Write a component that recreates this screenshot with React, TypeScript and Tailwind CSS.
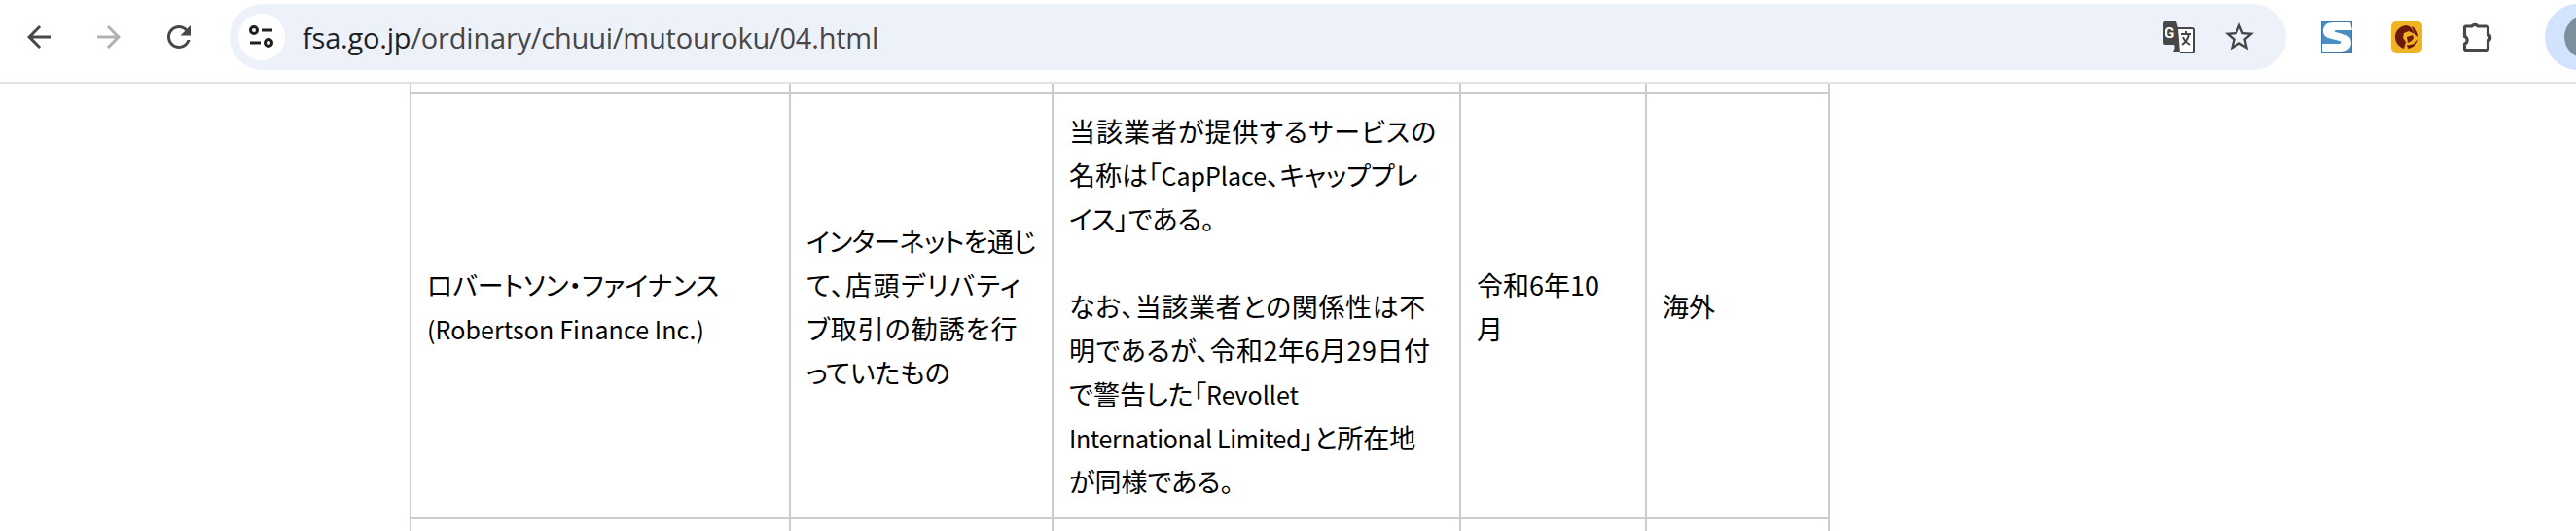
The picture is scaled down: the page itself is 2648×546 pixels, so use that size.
function BackIcon() {
    return (
        <svg width="36" height="36" viewBox="0 0 24 24" fill="#474747">
            <path d="M20 11H7.83l5.59-5.59L12 4l-8 8 8 8 1.41-1.41L7.83 13H20v-2z" />
        </svg>
    );
}

function ForwardIcon() {
    return (
        <svg width="36" height="36" viewBox="0 0 24 24" fill="#b1b1b1">
            <path d="M12 4l-1.41 1.41L16.17 11H4v2h12.17l-5.58 5.59L12 20l8-8z" />
        </svg>
    );
}

function ReloadIcon() {
    return (
        <svg width="36" height="36" viewBox="0 0 24 24" fill="#474747">
            <path d="M17.65 6.35C16.2 4.9 14.21 4 12 4c-4.42 0-7.99 3.58-7.99 8s3.57 8 7.99 8c3.73 0 6.84-2.55 7.73-6h-2.08c-.82 2.33-3.04 4-5.65 4-3.31 0-6-2.69-6-6s2.69-6 6-6c1.66 0 3.14.69 4.22 1.78L13 11h7V4l-2.35 2.35z" />
        </svg>
    );
}

function StarIcon() {
    return (
        <svg width="36" height="36" viewBox="0 0 24 24" fill="#474747">
            <path d="M22 9.24l-7.19-.62L12 2 9.19 8.63 2 9.24l5.46 4.73L5.82 21 12 17.27 18.18 21l-1.63-7.03L22 9.24zM12 15.4l-3.76 2.27 1-4.28-3.32-2.88 4.38-.38L12 6.1l1.71 4.04 4.38.38-3.32 2.88 1 4.28L12 15.4z" />
        </svg>
    );
}

function TuneIcon() {
    return (
        <svg width="26" height="24" viewBox="0 0 26 24" fill="none" stroke="#1f1f1f" strokeWidth="3">
            <circle cx="5" cy="5" r="3.5" />
            <path d="M13 5h11M1 18h11" />
            <circle cx="20" cy="18" r="3.5" />
        </svg>
    );
}

function TranslateIcon() {
    return (
        <svg width="34" height="34" viewBox="0 0 34 34">
            <path d="M3 1h12l9 31h-9l-2-7H3a2 2 0 0 1-2-2V3a2 2 0 0 1 2-2z" fill="#474747" />
            <path d="M17 8h14a2 2 0 0 1 2 2v21a2 2 0 0 1-2 2H19" fill="#fff" stroke="#474747" strokeWidth="2" />
            <path d="M15 25l3 7h-6z" fill="#474747" />
            <text x="3" y="18" fontSize="15" fontWeight="700" fill="#fff" fontFamily="Roboto, sans-serif">G</text>
            <path d="M20 14h10M25 11v3M28 14c-1 5-4 9-7 11M22 17c1 3 4 6 7 8" fill="none" stroke="#474747" strokeWidth="2" />
        </svg>
    );
}

function ExtensionS() {
    return (
        <svg width="32" height="32" viewBox="0 0 32 32">
            <rect width="32" height="32" fill="#3d78a8" />
            <rect x="1" y="1" width="30" height="30" fill="#4a8fc4" />
            <path d="M30 1H12C5 1 2 5 2 10c0 5 4 7 9 8l8 2c2 .5 2 3-1 3H1v8h19c7 0 11-4 11-9 0-6-4-8-9-9l-7-2c-2-.6-2-2 1-2h16z" fill="#fff" />
        </svg>
    );
}

function ExtensionEagle() {
    return (
        <div className="flex h-8 w-8 items-center justify-center rounded-[5px] bg-[#f0b323]">
            <svg width="26" height="26" viewBox="0 0 26 26" fill="#6b1a0c">
                <path d="M12 1C5 2 1 7 1 13c0 6 4 10 9 12l2-7-3-4 1-5 5-2 4 2 2 1-3-6c-2-2-4-3-6-3z" />
                <path d="M18 2c4 2 7 6 7 11l-4-3zM25 15c-1 5-5 9-11 10l-1-4c5 1 9-2 12-6z" />
                <path d="M13 13l6-2 1 3c-1 2-3 4-6 5z" />
            </svg>
        </div>
    );
}

function ExtensionsIcon() {
    return (
        <svg width="36" height="34" viewBox="0 0 36 34" fill="none" stroke="#474747" strokeWidth="3.2" strokeLinejoin="round">
            <path d="M5 6h6a3.5 3.5 0 0 1 6 0h9a1.5 1.5 0 0 1 1.5 1.5v7a3.5 3.5 0 0 1 0 6.5v8a1.5 1.5 0 0 1-1.5 1.5H5a1.5 1.5 0 0 1-1.5-1.5v-5a4 4 0 0 0 0-7.5V7.5A1.5 1.5 0 0 1 5 6z" />
        </svg>
    );
}

function Toolbar() {
    return (
        <div className="flex h-[86px] shrink-0 items-start border-b-2 border-[#e3e3e3] bg-white">
            <div className="flex h-[76px] w-[236px] shrink-0 items-center gap-9 pl-[22px]">
                <BackIcon />
                <ForwardIcon />
                <ReloadIcon />
            </div>
            <div className="mt-1 flex h-[68px] w-[2114px] shrink-0 items-center rounded-full bg-[#edf2fa] pl-[9px] pr-[30px]">
                <div className="flex h-12 w-12 items-center justify-center rounded-full bg-white">
                    <TuneIcon />
                </div>
                <div className="ml-[18px] flex-1 font-['Open_Sans',sans-serif] text-[29px] leading-none tracking-[-0.2px] text-[#474747]">
                    <span className="text-[#1f1f1f]">fsa.go.jp</span>/ordinary/chuui/mutouroku/04.html
                </div>
                <div className="flex items-center gap-7">
                    <TranslateIcon />
                    <StarIcon />
                </div>
            </div>
            <div className="ml-9 flex h-[76px] items-center gap-10">
                <ExtensionS />
                <ExtensionEagle />
                <ExtensionsIcon />
            </div>
            <div className="ml-8 mt-[22px] h-[32px] w-1 rounded-full bg-[#d3e3fd]" />
            <div className="ml-[18px] mt-1 flex h-[68px] w-[68px] shrink-0 items-center rounded-full bg-[#d3e3fd] pl-5">
                <div className="h-11 w-11 shrink-0 rounded-full bg-[#7a919c]" />
            </div>
        </div>
    );
}

const cell = "border-2 border-[#cccccc] px-[16px] align-middle";
const stub = "border-x-2 border-b-2 border-[#cccccc]";

function Table() {
    return (
        <table className="ml-[421px] w-[1458px] table-fixed border-collapse font-['Noto_Sans_CJK_JP',sans-serif] text-[27px] leading-[45px] text-black [font-feature-settings:'palt']">
            <colgroup>
                <col className="w-[390px]" />
                <col className="w-[270px]" />
                <col className="w-[419px]" />
                <col className="w-[191px]" />
                <col className="w-[188px]" />
            </colgroup>
            <tbody>
                <tr className="h-[10px]">
                    <td className={stub} />
                    <td className={stub} />
                    <td className={stub} />
                    <td className={stub} />
                    <td className={stub} />
                </tr>
                <tr className="h-[437px]">
                    <td className={cell}>
                        ロバートソン・ファイナンス
                        <br />
                        <span className="text-[25px] leading-none tracking-[0.1px]">(Robertson Finance Inc.)</span>
                    </td>
                    <td className={cell}>
                        <span className="whitespace-nowrap tracking-[-0.6px]">インターネットを通じ</span>
                        <br />
                        <span className="tracking-[1.5px]">て、店頭デリバティ</span>
                        <br />
                        <span className="tracking-[1px]">ブ取引の勧誘を行</span>
                        <br />
                        っていたもの
                    </td>
                    <td className={cell}>
                        <span className="whitespace-nowrap tracking-[1px]">当該業者が提供するサービスの</span>
                        <br />
                        <span className="whitespace-nowrap">
                            名称は「<span className="text-[25px] leading-none">CapPlace</span>、キャッププレ
                        </span>
                        <br />
                        イス」である。
                        <br />
                        <br />
                        <span className="whitespace-nowrap tracking-[0.6px]">なお、当該業者との関係性は不</span>
                        <br />
                        <span className="whitespace-nowrap tracking-[0.5px]">明であるが、令和2年6月29日付</span>
                        <br />
                        で警告した「<span className="text-[25px] leading-none">Revollet</span>
                        <br />
                        <span className="whitespace-nowrap">
                            <span className="text-[25px] leading-none tracking-[-0.4px]">International Limited</span>」と所在地
                        </span>
                        <br />
                        が同様である。
                    </td>
                    <td className={cell}>
                        令和6年10
                        <br />月
                    </td>
                    <td className={cell}>海外</td>
                </tr>
                <tr className="h-[40px]">
                    <td className={cell} />
                    <td className={cell} />
                    <td className={cell} />
                    <td className={cell} />
                    <td className={cell} />
                </tr>
            </tbody>
        </table>
    );
}

export default function App() {
    return (
        <div className="flex h-[546px] w-[2648px] flex-col overflow-hidden bg-white">
            <Toolbar />
            <Table />
        </div>
    );
}
